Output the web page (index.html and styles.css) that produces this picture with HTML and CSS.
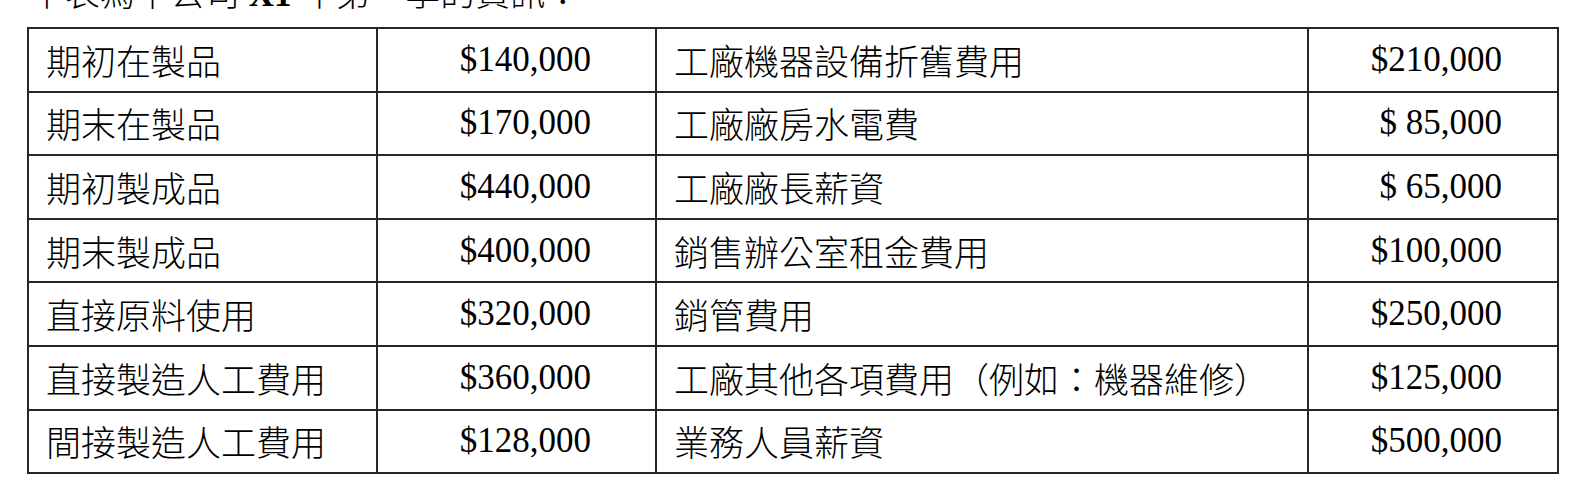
FILE: index.html
```html
<!DOCTYPE html>
<html lang="zh-Hant">
<head>
<meta charset="utf-8">
<link rel="stylesheet" href="styles.css">
</head>
<body>
<p class="intro">下表為甲公司 <b>X1</b> 年第一季的資訊：</p>
<table class="data">
  <colgroup>
    <col class="c1"><col class="c2"><col class="c3"><col class="c4">
  </colgroup>
  <tr><td class="label">期初在製品</td><td class="amt a1">$140,000</td><td class="label">工廠機器設備折舊費用</td><td class="amt a2">$210,000</td></tr>
  <tr><td class="label">期末在製品</td><td class="amt a1">$170,000</td><td class="label">工廠廠房水電費</td><td class="amt a2">$ 85,000</td></tr>
  <tr><td class="label">期初製成品</td><td class="amt a1">$440,000</td><td class="label">工廠廠長薪資</td><td class="amt a2">$ 65,000</td></tr>
  <tr><td class="label">期末製成品</td><td class="amt a1">$400,000</td><td class="label">銷售辦公室租金費用</td><td class="amt a2">$100,000</td></tr>
  <tr><td class="label">直接原料使用</td><td class="amt a1">$320,000</td><td class="label">銷管費用</td><td class="amt a2">$250,000</td></tr>
  <tr><td class="label">直接製造人工費用</td><td class="amt a1">$360,000</td><td class="label">工廠其他各項費用（例如：機器維修）</td><td class="amt a2">$125,000</td></tr>
  <tr><td class="label">間接製造人工費用</td><td class="amt a1">$128,000</td><td class="label">業務人員薪資</td><td class="amt a2">$500,000</td></tr>
</table>
</body>
</html>
```

FILE: styles.css
```css
html, body {
  margin: 0;
  padding: 0;
  background: #fff;
}
body {
  font-family: "Liberation Serif", "Noto Sans CJK TC", serif;
  color: #000;
  font-size: 35px;
}
.intro {
  margin: -23px 0 0 30px;
  line-height: 35px;
  height: 35px;
  font-weight: 300;
  font-family: "Liberation Serif", "Noto Sans CJK TC", serif;
}
.intro b {
  font-weight: 700;
}
.data {
  margin: 15px 0 0 27px;
  border-collapse: collapse;
  table-layout: fixed;
  width: 1530px;
}
.c1 { width: 349px; }
.c2 { width: 279px; }
.c3 { width: 652px; }
.c4 { width: 250px; }
.data tr {
  height: 63.6px;
}
.data td {
  border: 2px solid #262626;
  padding: 0;
  line-height: 40px;
  vertical-align: middle;
  white-space: nowrap;
}
.label {
  padding-left: 17px !important;
  font-family: "Noto Sans CJK TC", "Liberation Serif", sans-serif;
  font-weight: 300;
}
.amt {
  text-align: right;
}
.a1 { padding-right: 64px !important; }
.a2 { padding-right: 55px !important; }
```
